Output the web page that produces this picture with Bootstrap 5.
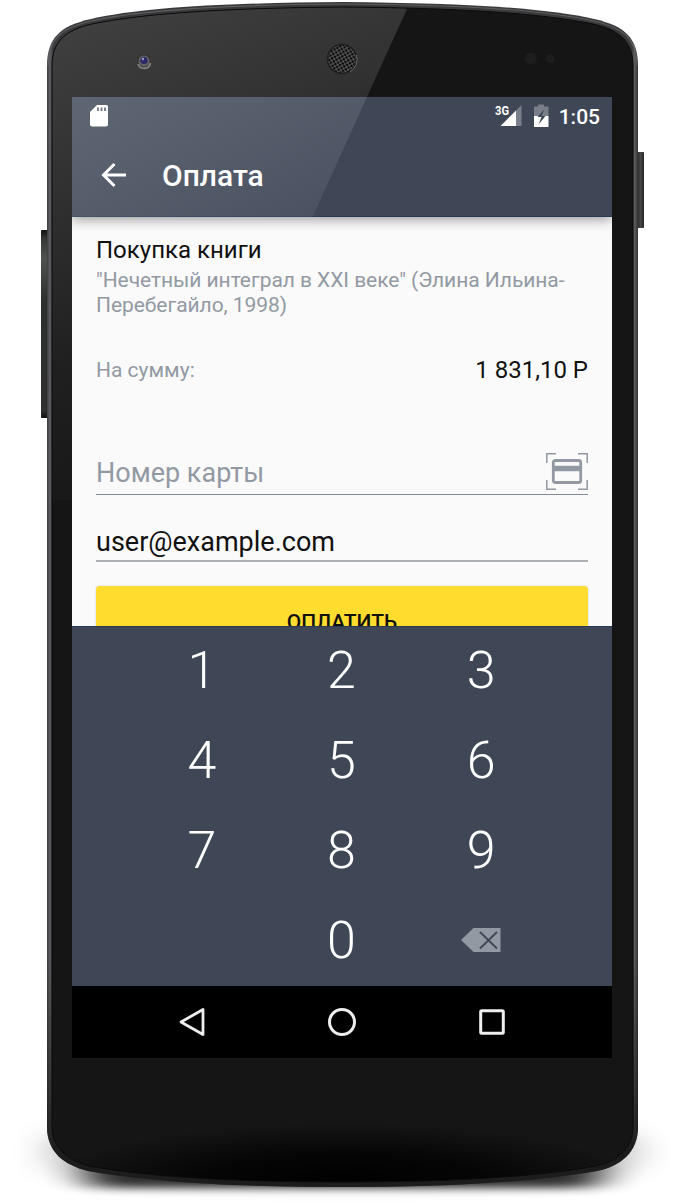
<!DOCTYPE html>
<html lang="ru">
<head>
<meta charset="utf-8">
<meta name="viewport" content="width=device-width, initial-scale=1">
<title>Оплата</title>
<link href="https://cdn.jsdelivr.net/npm/bootstrap@5.3.0/dist/css/bootstrap.min.css" rel="stylesheet">
<style>
body{font-family:Roboto,"Noto Sans",sans-serif;background:#fff;color:#111;overflow:hidden}
.stage{width:685px;height:1203px;padding:97px 73px 0 72px}
.shell{z-index:0}
.screen{width:540px;height:961px;z-index:1;background:#fafafa}
.topbar{height:120px;background:#3f4757;color:#fff;box-shadow:0 2px 12px rgba(0,0,0,.42);border-bottom:1px solid #2a3c54;z-index:2}
.glare{z-index:3;pointer-events:none}
.status{height:38px;padding:0 12px 0 18px}
.clock{font-size:21px;font-weight:500;line-height:38px;padding:1px 0 0 10px}
.appbar{height:82px;padding-left:28px;gap:34px}
.app-title{font-size:30px;font-weight:500;line-height:40px}
.content-area{height:409px;padding:18px 24px 0}
.item-name{font-size:24px;line-height:30px}
.soft{color:#9299a3}
.item-desc{font-size:21px;line-height:24.6px;margin-top:3px;letter-spacing:-.06px}
.sum-row{margin-top:35px;height:36px}
.sum-label{font-size:21px;padding-top:1px}
.sum-value{font-size:24px}
.line-field{font-size:27px;border-bottom:1px solid #858d99}
.card-no{margin-top:63px;height:44px}
.card-no span{padding-top:1px}
.card-no svg{margin-bottom:2px}
.mail{height:67px;padding-top:30px;border-bottom:2px solid #adb0b4}
.pay{margin-top:24px;height:73px;background:#ffdc2d;border-radius:4px;font-size:21px;font-weight:500;color:#111;border:0;box-shadow:0 0 2px rgba(0,0,0,.2)}
.keypad{height:360px;background:#3f4757;padding:0 61px 0 60px;color:#fff;border-top:1px solid #263b57;z-index:1}
.key{height:90px;font-size:52px;font-weight:300;line-height:88px}
.nav-keys{height:71px;background:#000;padding:0 45px}
</style>
</head>
<body>
<main class="stage position-relative overflow-hidden">
<svg class="shell position-absolute top-0 start-0" width="685" height="1203" viewBox="0 0 685 1203" aria-hidden="true">
<defs>
<linearGradient id="shine" gradientUnits="userSpaceOnUse" x1="50" y1="0" x2="230" y2="500"><stop offset="0" stop-color="#424242"/><stop offset=".3" stop-color="#333"/><stop offset=".65" stop-color="#202020"/><stop offset="1" stop-color="#151515"/></linearGradient>
<radialGradient id="low" cx=".5" cy=".9" r=".55"><stop offset="0" stop-color="#000"/><stop offset=".5" stop-color="#000" stop-opacity=".75"/><stop offset="1" stop-color="#000" stop-opacity="0"/></radialGradient>
<linearGradient id="rim" x1="0" x2="1"><stop offset="0" stop-color="#3a3b3d"/><stop offset=".005" stop-color="#606164"/><stop offset=".01" stop-color="#39393b"/><stop offset=".99" stop-color="#39393b"/><stop offset=".994" stop-color="#5d5d5f"/><stop offset="1" stop-color="#333"/></linearGradient>
<linearGradient id="rimlow" x1="0" y1="0" x2="0" y2="1"><stop offset=".8" stop-color="#222" stop-opacity="0"/><stop offset=".97" stop-color="#191919" stop-opacity=".9"/></linearGradient>
<linearGradient id="side" x1="0" x2="1"><stop offset="0" stop-color="#222"/><stop offset=".5" stop-color="#484848"/><stop offset="1" stop-color="#252525"/></linearGradient>
<linearGradient id="sidev" x1="0" y1="0" x2="0" y2="1"><stop offset="0" stop-color="#111"/><stop offset=".04" stop-color="#333"/><stop offset=".15" stop-color="#505252"/><stop offset=".38" stop-color="#2d2f2f"/><stop offset=".96" stop-color="#2f2f2f"/><stop offset="1" stop-color="#111"/></linearGradient>
<pattern id="mesh" width="4.6" height="4.6" patternUnits="userSpaceOnUse" patternTransform="rotate(15 342 59)"><rect width="4.6" height="4.6" fill="#555"/><circle cx="1.15" cy="1.15" r="1.25" fill="#050505"/><circle cx="3.45" cy="3.45" r="1.25" fill="#050505"/></pattern>
<filter id="b1" x="-30%" y="-150%" width="160%" height="400%"><feGaussianBlur stdDeviation="20 4.5"/></filter>
<filter id="b2" x="-30%" y="-100%" width="160%" height="300%"><feGaussianBlur stdDeviation="16 14"/></filter>
<clipPath id="face"><path d="M52 66C52 42 65 30 92 24C145 13 230 8 343 7C456 8 540 13 593 24C620 30 633 42 633 66V1126C633 1147 619 1161 596 1166C530 1178 440 1182 343 1182C246 1182 155 1178 89 1166C66 1160 52 1146 52 1126Z"/></clipPath>
</defs>
<ellipse cx="343" cy="1152" rx="305" ry="22" fill="#000" opacity=".38" filter="url(#b2)"/>
<rect x="85" y="1160" width="516" height="28" rx="14" fill="#000" opacity=".8" filter="url(#b1)"/>
<rect x="41" y="230" width="8" height="188" rx="1" fill="url(#sidev)"/>
<rect x="637" y="152" width="7" height="76" rx="1" fill="url(#side)"/>
<path d="M47 66C47 38 60 26 91 19C145 7 230 3 343 2C456 3 540 7 594 19C625 26 638 38 638 66V1127C638 1152 621 1166 597 1171C530 1183 440 1187 343 1187C246 1187 155 1183 88 1171C64 1165 47 1152 47 1127Z" fill="url(#rim)"/>
<path d="M47 66C47 38 60 26 91 19C145 7 230 3 343 2C456 3 540 7 594 19C625 26 638 38 638 66V1127C638 1152 621 1166 597 1171C530 1183 440 1187 343 1187C246 1187 155 1183 88 1171C64 1165 47 1152 47 1127Z" fill="url(#rimlow)"/>
<path d="M48 66C48 39 61 28 91 21C145 9 230 4.800 343 4C456 4.800 540 9 594 21C624 28 637 39 637 66" fill="none" stroke="#5c5d5f" stroke-width="1.200"/>
<g clip-path="url(#face)">
<rect x="50" y="0" width="590" height="1200" fill="#151515"/>
<path d="M50 0H411L184 500H50Z" fill="url(#shine)"/>
<rect x="70" y="1085" width="545" height="110" fill="url(#low)"/>
</g>
<path d="M52 66C52 42 65 30 92 24C145 13 230 8 343 7C456 8 540 13 593 24C620 30 633 42 633 66V1126C633 1147 619 1161 596 1166C530 1178 440 1182 343 1182C246 1182 155 1178 89 1166C66 1160 52 1146 52 1126Z" fill="none" stroke="#0b0b0b" stroke-width="1"/>
<circle cx="144" cy="61" r="7" fill="#333"/><path d="M138 64A6.500 6.500 0 0 0 150.500 63" fill="none" stroke="#808080" stroke-width="1.800"/><circle cx="144" cy="61" r="5.600" fill="#626262"/><circle cx="144" cy="60.500" r="3.600" fill="#28286a"/><circle cx="143" cy="59" r="1.200" fill="#a0a0c5"/>
<circle cx="342" cy="59" r="14.500" fill="url(#mesh)" stroke="#202020" stroke-width="1.500"/><path d="M350 72A15 15 0 0 0 356.500 55" fill="none" stroke="#686868"/>
<circle cx="531" cy="58.500" r="6" fill="#1d1d1d"/><circle cx="532" cy="59" r="1" fill="#351e1e"/><circle cx="550" cy="58.500" r="4.500" fill="#1e1e1e"/>
</svg>

<section class="screen position-relative overflow-hidden d-flex flex-column">
<header class="topbar position-relative flex-shrink-0">
<div class="status d-flex align-items-center justify-content-between">
<svg width="18" height="22" viewBox="0 0 18 22" aria-label="SD"><path d="M7 0H16Q18 0 18 2V19.500Q18 21.500 16 21.500H2Q0 21.500 0 19.500V7Z" fill="#fff"/><path d="M8 2.500V6M11.500 2.500V6M15 2.500V6" stroke="#515a6a" stroke-width="1.800"/></svg>
<div class="d-flex align-items-center">
<svg width="54" height="26" viewBox="0 0 54 26" aria-label="3G"><text x="0" y="11.500" font-size="13" font-weight="700" fill="#fff" textLength="14" lengthAdjust="spacingAndGlyphs">3G</text><path d="M21 7.500L26.500 2V23H21Z" fill="#fff" opacity=".3"/><path d="M5.500 23L21 7.500V23Z" fill="#fff"/><path d="M39 3.500H43V1.500H49V3.500H53.500V13H39Z" fill="#fff" opacity=".3"/><path d="M39 13H53.500V24H39Z" fill="#fff"/><path d="M49.500 6L42.500 14H46.500L43.500 21.500L50.500 13H46.500Z" fill="#3f4757"/></svg>
<span class="clock">1:05</span>
</div>
</div>
<div class="appbar d-flex align-items-center">
<svg width="28" height="28" viewBox="0 0 28 28" class="mb-1" aria-label="Назад"><path d="M26 15H4M14.500 4L3.500 15L14.500 26" fill="none" stroke="#fff" stroke-width="3"/></svg>
<h1 class="app-title m-0">Оплата</h1>
</div>
<svg class="glare position-absolute top-0 start-0" width="540" height="120" aria-hidden="true"><defs><linearGradient id="gl" x1="0" y1="0" x2="1" y2=".8"><stop offset="0" stop-color="#fff" stop-opacity=".17"/><stop offset="1" stop-color="#fff" stop-opacity=".06"/></linearGradient></defs><path d="M0 0H295L240.500 120H0Z" fill="url(#gl)"/></svg>
</header>
<div class="content-area flex-shrink-0 overflow-hidden">
<div class="item-name">Покупка книги</div>
<div class="item-desc soft">"Нечетный интеграл в XXI веке" (Элина Ильина-<br>Перебегайло, 1998)</div>
<div class="sum-row d-flex align-items-center justify-content-between"><span class="sum-label soft">На сумму:</span><span class="sum-value">1 831,10 Р</span></div>
<div class="line-field card-no soft d-flex justify-content-between align-items-center"><span>Номер карты</span>
<svg width="42" height="37" viewBox="0 0 42 37" fill="none" stroke="#9299a3" aria-label="Сканировать"><path d="M10 .8H.8V10M32 .8H41.200V10M.8 27V36.200H10M41.200 27V36.200H32" stroke-width="1.500"/><rect x="7.300" y="7.500" width="27.400" height="22" rx="2" stroke-width="2.800"/><path d="M7 15.500H35" stroke-width="5.500"/></svg></div>
<div class="line-field mail d-flex align-items-center">user@example.com</div>
<button class="pay w-100 d-block" type="button">ОПЛАТИТЬ</button>
</div>
<div class="keypad flex-shrink-0 position-relative">
<div class="row g-0 text-center">
<div class="col-4 key">1</div><div class="col-4 key">2</div><div class="col-4 key">3</div>
<div class="col-4 key">4</div><div class="col-4 key">5</div><div class="col-4 key">6</div>
<div class="col-4 key">7</div><div class="col-4 key">8</div><div class="col-4 key">9</div>
<div class="col-4 key"></div><div class="col-4 key">0</div>
<div class="col-4 key d-flex align-items-center justify-content-center pb-1"><svg width="40" height="24" viewBox="0 0 40 24" aria-label="Удалить"><path d="M0 12L12.500 0H39.500V24H12.500Z" fill="#9299a3"/><path d="M19 4L36 20.500M36 4L19 20.500" stroke="#3f4757" stroke-width="1.800"/></svg></div>
</div>
</div>
<nav class="nav-keys flex-grow-1" aria-label="Система">
<div class="row g-0 h-100 align-items-center text-center">
<div class="col-4"><svg width="30" height="30" viewBox="0 0 30 30"><path d="M4 15L26 2.500V27.500Z" fill="none" stroke="#eee" stroke-width="2.800" stroke-linejoin="round"/></svg></div>
<div class="col-4"><svg width="30" height="30" viewBox="0 0 30 30"><circle cx="15" cy="15" r="12.500" fill="none" stroke="#eee" stroke-width="3"/></svg></div>
<div class="col-4"><svg width="30" height="30" viewBox="0 0 30 30"><rect x="3.700" y="3.700" width="22.600" height="22.600" rx="1" fill="none" stroke="#eee" stroke-width="3"/></svg></div>
</div>
</nav>
</section>
</main>
<script src="https://cdn.jsdelivr.net/npm/bootstrap@5.3.0/dist/js/bootstrap.bundle.min.js"></script>
</body>
</html>
